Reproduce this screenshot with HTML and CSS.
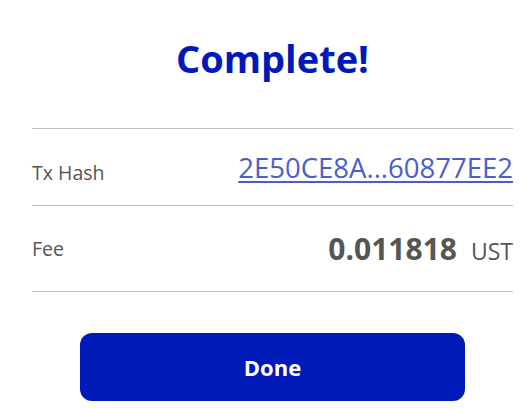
FILE: index.html
```html
<!DOCTYPE html>
<html lang="en">
<head>
    <meta charset="UTF-8">
    <meta name="viewport" content="width=device-width, initial-scale=1.0">
    <title>Complete</title>
    <link rel="stylesheet" href="styles.css">
</head>
<body>

    <div class="resultado">
        <h1 class="titulo">Complete!</h1>

        <div class="detalles">
            <div class="fila fila-hash">
                <span class="etiqueta">Tx Hash</span>
                <a href="#" class="hash">2E50CE8A...60877EE2</a>
            </div>
            <div class="fila fila-fee">
                <span class="etiqueta">Fee</span>
                <span class="valor"><strong>0.011818</strong><span class="moneda">UST</span></span>
            </div>
        </div>

        <button class="boton-done">Done</button>
    </div>

</body>
</html>
```

FILE: styles.css
```css
body {
    margin: 0;
    padding: 0;
    background-color: #fff;
    font-family: "Open Sans", "Liberation Sans", sans-serif;
}
.resultado {
    padding: 0 19px 0 32px;
    display: flex;
    flex-direction: column;
}
.titulo {
    margin: 32px 0 44px;
    font-size: 38px;
    line-height: 52px;
    font-weight: 700;
    color: #0019b8;
    text-align: center;
}
.detalles {
    border-bottom: 1px solid #bdbdbd;
}
.fila {
    display: flex;
    justify-content: space-between;
    border-top: 1px solid #bdbdbd;
}
.fila-hash {
    align-items: flex-end;
    padding: 20px 0 19px;
}
.fila-fee {
    align-items: center;
    padding: 22px 0;
}
.etiqueta {
    font-size: 19.5px;
    color: #555;
}
.hash {
    font-size: 27.5px;
    color: #4a5ec8;
    text-decoration: underline;
    text-underline-offset: 3px;
}
.valor {
    color: #555;
    font-size: 30px;
}
.valor strong {
    font-weight: 700;
}
.moneda {
    font-size: 23px;
    margin-left: 14px;
}
.boton-done {
    align-self: center;
    margin-top: 41px;
    width: 385px;
    height: 68px;
    background-color: #001ab8;
    color: white;
    font-family: "Open Sans", "Liberation Sans", sans-serif;
    font-size: 22px;
    font-weight: 700;
    border: none;
    border-radius: 12px;
    cursor: pointer;
}
```
